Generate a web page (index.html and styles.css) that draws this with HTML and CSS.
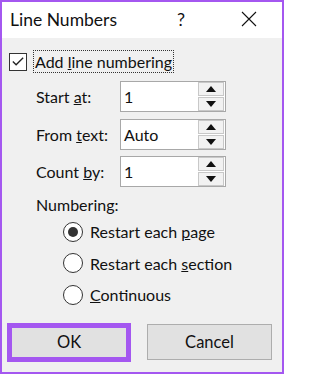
FILE: index.html
```html
<!DOCTYPE html>
<html>
<head>
<meta charset="utf-8">
<link rel="stylesheet" href="styles.css">
</head>
<body>
<div class="dialog">
  <div class="titlebar">
    <span class="title">Line Numbers</span>
    <span class="help">?</span>
    <svg class="close" width="16" height="16" viewBox="0 0 16 16"><path d="M1 1 L15 15 M15 1 L1 15" stroke="#111" stroke-width="1.1" fill="none"/></svg>
  </div>
  <div class="content">
    <div class="checkrow">
      <span class="checkbox"><svg width="17" height="17" viewBox="0 0 17 17"><polyline points="3,8.5 6.5,12 14,4.5" fill="none" stroke="#222" stroke-width="1.4"/></svg></span>
      <span class="focus">Add <u>l</u>ine numbering</span>
    </div>
    <div class="fields">
      <div class="field">
        <span class="label">Start <u>a</u>t:</span>
        <div class="spin"><span class="val">1</span><div class="btns"><span class="up"></span><span class="down"></span></div></div>
      </div>
      <div class="field">
        <span class="label">From <u>t</u>ext:</span>
        <div class="spin"><span class="val">Auto</span><div class="btns"><span class="up"></span><span class="down"></span></div></div>
      </div>
      <div class="field">
        <span class="label">Count <u>b</u>y:</span>
        <div class="spin"><span class="val">1</span><div class="btns"><span class="up"></span><span class="down"></span></div></div>
      </div>
    </div>
    <div class="numbering">Numbering:</div>
    <div class="radios">
      <div class="radio"><span class="circle checked"></span><span>Restart each <u>p</u>age</span></div>
      <div class="radio"><span class="circle"></span><span>Restart each <u>s</u>ection</span></div>
      <div class="radio"><span class="circle"></span><span><u>C</u>ontinuous</span></div>
    </div>
    <div class="buttons">
      <div class="okwrap"><div class="btn">OK</div></div>
      <div class="btn cancel">Cancel</div>
    </div>
  </div>
</div>
</body>
</html>
```
FILE: styles.css
```css
html, body {
  margin: 0;
  padding: 0;
}
body {
  width: 284px;
  height: 374px;
  font-family: "Lato", "Noto Sans", sans-serif;
  color: #111;
}
.dialog {
  box-sizing: border-box;
  width: 284px;
  height: 374px;
  border: 2px solid #a457f0;
  background: #f0f0f0;
  display: flex;
  flex-direction: column;
}
.titlebar {
  height: 36px;
  background: #fff;
  display: flex;
  align-items: center;
  padding-left: 8px;
  flex-shrink: 0;
}
.title {
  font-size: 17.5px;
  width: 167px;
  margin-top: -2px;
}
.help {
  font-size: 18px;
  width: 64px;
  margin-top: -2px;
}
.close {
  margin-top: -2px;
}
.content {
  display: flex;
  flex-direction: column;
  font-size: 16px;
}
.checkrow {
  display: flex;
  align-items: center;
  margin-top: 12px;
  margin-left: 7px;
  height: 23px;
}
.checkbox {
  box-sizing: border-box;
  width: 18px;
  height: 18px;
  border: 1px solid #333;
  background: #fff;
  display: flex;
  align-items: center;
  justify-content: center;
}
.focus {
  margin-left: 6px;
  border: 1px dotted #333;
  padding: 0 1px;
  line-height: 21px;
}
.fields {
  display: flex;
  flex-direction: column;
  gap: 6.5px;
  margin-top: 8px;
}
.field {
  display: flex;
  align-items: center;
  height: 31px;
  padding-left: 34px;
}
.label {
  width: 84px;
}
.spin {
  box-sizing: border-box;
  width: 106px;
  height: 31px;
  border: 1px solid #a8a8a8;
  background: #fff;
  display: flex;
  align-items: center;
}
.val {
  flex: 1;
  padding-left: 3px;
}
.btns {
  width: 26px;
  height: 29px;
  display: flex;
  flex-direction: column;
  gap: 1px;
  margin-right: 1px;
}
.up, .down {
  flex: 1;
  box-sizing: border-box;
  border: 1px solid #c8c8c8;
  background: #f2f2f2;
  display: flex;
  align-items: center;
  justify-content: center;
}
.up::after {
  content: "";
  border-left: 5px solid transparent;
  border-right: 5px solid transparent;
  border-bottom: 6px solid #111;
}
.down::after {
  content: "";
  border-left: 5px solid transparent;
  border-right: 5px solid transparent;
  border-top: 6px solid #111;
}
.numbering {
  margin-left: 34px;
  margin-top: 7px;
  line-height: 22px;
}
.radios {
  display: flex;
  flex-direction: column;
  margin-left: 61px;
  margin-top: 0;
}
.radio {
  display: flex;
  align-items: center;
  height: 31.5px;
}
.circle {
  box-sizing: border-box;
  width: 20px;
  height: 20px;
  border: 1.5px solid #333;
  border-radius: 50%;
  background: #fff;
  margin-right: 7px;
  display: flex;
  align-items: center;
  justify-content: center;
}
.circle.checked::after {
  content: "";
  width: 10px;
  height: 10px;
  border-radius: 50%;
  background: #333;
}
.buttons {
  display: flex;
  align-items: center;
  margin-top: 12px;
  padding-left: 5px;
}
.okwrap {
  border: 5px solid #a457f0;
  width: 114px;
  height: 29px;
}
.btn {
  box-sizing: border-box;
  height: 100%;
  background: #e1e1e1;
  display: flex;
  align-items: center;
  justify-content: center;
  font-size: 16.5px;
}
.cancel {
  margin-left: 16px;
  width: 125px;
  height: 36px;
  border: 1px solid #adadad;
}
```
